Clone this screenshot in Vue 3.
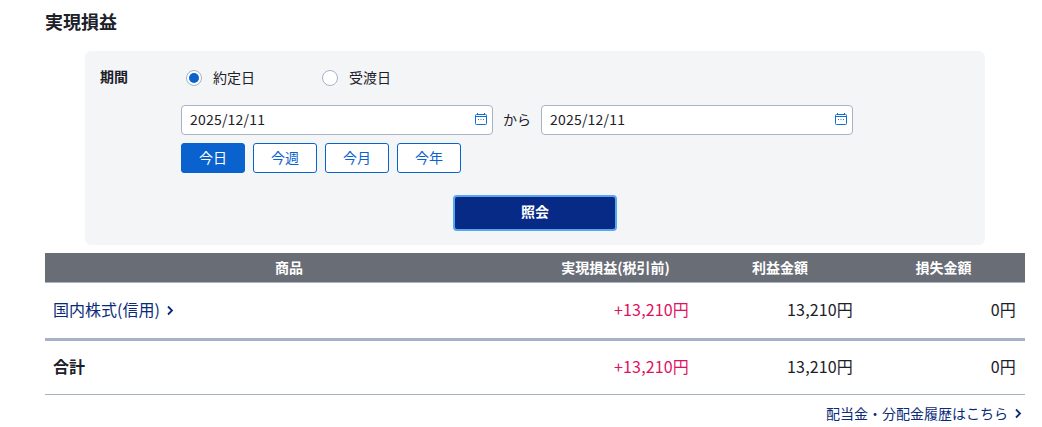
<script setup>
import { ref } from 'vue'

const kind = ref('trade')
const presets = ['今日', '今週', '今月', '今年']
const rows = [
  { name: '国内株式(信用)', total: '+13,210円', profit: '13,210円', loss: '0円', link: true }
]
</script>

<template>
  <div class="page">
    <h1 class="title">実現損益</h1>

    <section class="panel">
      <div class="period">
        <div class="period-label">期間</div>
        <div class="period-body">
          <div class="radios">
            <label class="radio" :class="{ on: kind === 'trade' }" @click="kind = 'trade'">
              <span class="dot"></span><span class="radio-text">約定日</span>
            </label>
            <label class="radio" :class="{ on: kind === 'settle' }" @click="kind = 'settle'">
              <span class="dot"></span><span class="radio-text">受渡日</span>
            </label>
          </div>
          <div class="dates">
            <div class="date">
              <span>2025/12/11</span>
              <svg class="cal" width="14" height="14" viewBox="0 0 14 14" fill="none">
                <rect x="1.5" y="2.5" width="11" height="10" rx="1" stroke="#0f6fd0" />
                <path d="M1 4.5h12" stroke="#0f6fd0" />
                <path d="M3.5 1v1.5M10.5 1v1.5" stroke="#0f6fd0" />
                <path d="M4 7.5h1M6.5 7.5h1M9 7.5h1" stroke="#5d7390" />
              </svg>
            </div>
            <span class="kara">から</span>
            <div class="date">
              <span>2025/12/11</span>
              <svg class="cal" width="14" height="14" viewBox="0 0 14 14" fill="none">
                <rect x="1.5" y="2.5" width="11" height="10" rx="1" stroke="#0f6fd0" />
                <path d="M1 4.5h12" stroke="#0f6fd0" />
                <path d="M3.5 1v1.5M10.5 1v1.5" stroke="#0f6fd0" />
                <path d="M4 7.5h1M6.5 7.5h1M9 7.5h1" stroke="#5d7390" />
              </svg>
            </div>
          </div>
          <div class="presets">
            <button
              v-for="(p, i) in presets"
              :key="p"
              class="preset"
              :class="{ active: i === 0 }"
            >{{ p }}</button>
          </div>
        </div>
      </div>
      <div class="submit-row">
        <button class="submit">照会</button>
      </div>
    </section>

    <table class="result">
      <colgroup>
        <col class="c1" />
        <col class="c2" />
        <col class="c3" />
        <col class="c4" />
      </colgroup>
      <thead>
        <tr>
          <th>商品</th>
          <th>実現損益(税引前)</th>
          <th>利益金額</th>
          <th>損失金額</th>
        </tr>
      </thead>
      <tbody>
        <tr v-for="r in rows" :key="r.name" class="row">
          <td class="name">
            <a class="link">{{ r.name }}<svg width="8" height="11" viewBox="0 0 8 11" fill="none"><path d="M2 1.5l4 4-4 4" stroke="#0a2a7a" stroke-width="1.8" /></svg></a>
          </td>
          <td class="num plus">{{ r.total }}</td>
          <td class="num">{{ r.profit }}</td>
          <td class="num">{{ r.loss }}</td>
        </tr>
        <tr class="sum">
          <td class="name"><strong>合計</strong></td>
          <td class="num plus">+13,210円</td>
          <td class="num">13,210円</td>
          <td class="num">0円</td>
        </tr>
      </tbody>
    </table>

    <div class="more">
      <a class="link">配当金・分配金履歴はこちら<svg width="8" height="11" viewBox="0 0 8 11" fill="none"><path d="M2 1.5l4 4-4 4" stroke="#0a2a7a" stroke-width="1.8" /></svg></a>
    </div>
  </div>
</template>

<style>
html, body {
  background: #fff;
}
</style>

<style scoped>
.page {
  width: 980px;
  margin-left: 45px;
  padding-top: 10px;
  font-family: "Noto Sans CJK JP", "Noto Sans", sans-serif;
  font-size: 14px;
  color: #1c2129;
}

.title {
  margin: 0 0 19px;
  font-size: 18px;
  line-height: 22px;
  font-weight: 700;
}

.panel {
  width: 900px;
  height: 194px;
  margin-left: 40px;
  box-sizing: border-box;
  padding-top: 16px;
  background: #f4f5f7;
  border-radius: 6px;
}

.period {
  display: flex;
}

.period-label {
  width: 96px;
  padding-left: 15px;
  box-sizing: border-box;
  font-size: 14px;
  line-height: 18px;
  font-weight: 700;
}

.period-body {
  flex: 1;
}

.radios {
  display: flex;
  height: 22px;
  padding-left: 5px;
  margin-bottom: 16px;
}

.radio {
  display: flex;
  align-items: center;
  width: 136px;
  font-size: 14px;
  line-height: 21px;
}

.radio-text {
  padding-bottom: 2px;
}

.dot {
  width: 14px;
  height: 14px;
  margin-right: 11px;
  border: 1px solid #a9b1c6;
  border-radius: 50%;
  background: #fff;
  position: relative;
}

.radio.on .dot::after {
  content: "";
  position: absolute;
  left: 2px;
  top: 2px;
  width: 10px;
  height: 10px;
  border-radius: 50%;
  background: #0a62cf;
}

.dates {
  display: flex;
  align-items: center;
  margin-bottom: 8px;
}

.date {
  display: flex;
  align-items: center;
  justify-content: space-between;
  width: 312px;
  height: 30px;
  box-sizing: border-box;
  padding: 0 4px 2px 8px;
  background: #fff;
  border: 1px solid #a9b1c6;
  border-radius: 4px;
  font-size: 14px;
  letter-spacing: 0.2px;
}

.kara {
  width: 48px;
  padding-bottom: 2px;
  text-align: center;
  font-size: 14px;
}

.presets {
  display: flex;
  gap: 8px;
}

.preset {
  width: 64px;
  height: 30px;
  padding: 0 0 2px;
  background: #fff;
  border: 1px solid #0a62cf;
  border-radius: 3px;
  color: #0a62cf;
  font: inherit;
  font-size: 14px;
}

.preset.active {
  background: #0a62cf;
  color: #fff;
}

.submit-row {
  display: flex;
  justify-content: center;
  margin-top: 22px;
}

.submit {
  width: 164px;
  height: 36px;
  padding: 0 0 4px;
  background: #082a87;
  border: 2px solid #5aa5f0;
  border-radius: 4px;
  color: #fff;
  font: inherit;
  font-size: 14px;
  font-weight: 700;
}

.result {
  width: 980px;
  margin-top: 8px;
  border-collapse: collapse;
  table-layout: fixed;
}

.c1 { width: 488px; }
.c2 { width: 165px; }
.c3 { width: 164px; }
.c4 { width: 163px; }

th {
  height: 27px;
  padding: 0 0 2px;
  background: #696d76;
  border-bottom: 1px solid #a9b1c6;
  color: #fff;
  font-size: 14px;
  font-weight: 700;
}

td {
  padding: 0 8px 3px;
}

.row td {
  height: 52px;
  border-bottom: 3px solid #a9b1c6;
}

.sum td {
  height: 49px;
  padding-bottom: 4px;
  border-bottom: 1px solid #a9b1c6;
}

.name {
  font-size: 16px;
}

.name strong {
  font-weight: 700;
}

.num {
  padding-right: 9px;
  text-align: right;
  font-size: 16px;
  letter-spacing: 0.15px;
}

.plus {
  color: #e0125f;
}

.link {
  color: #0a2a7a;
}

.link svg {
  margin-left: 6px;
}

.more {
  margin-top: 8px;
  padding-right: 3px;
  text-align: right;
  font-size: 14px;
  line-height: 20px;
}
</style>
